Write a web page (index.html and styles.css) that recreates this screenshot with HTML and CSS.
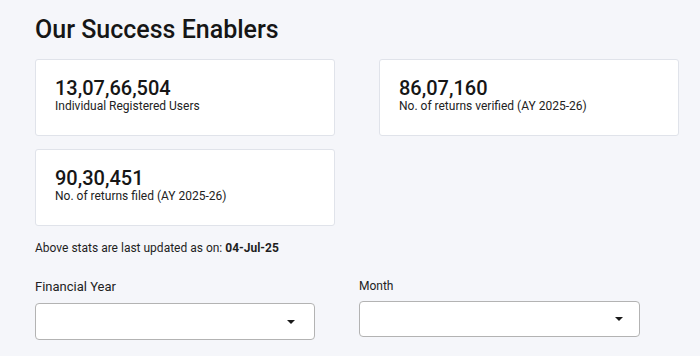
FILE: index.html
```html
<!DOCTYPE html>
<html lang="en">
<head>
<meta charset="utf-8">
<title>Our Success Enablers</title>
<link rel="stylesheet" href="styles.css">
</head>
<body>
<main class="page">
  <h1 class="title">Our Success Enablers</h1>
  <section class="stats">
    <div class="card">
      <div class="num">13,07,66,504</div>
      <div class="label">Individual Registered Users</div>
    </div>
    <div class="card">
      <div class="num">86,07,160</div>
      <div class="label">No. of returns verified (AY 2025-26)</div>
    </div>
    <div class="card">
      <div class="num">90,30,451</div>
      <div class="label">No. of returns filed (AY 2025-26)</div>
    </div>
  </section>
  <p class="updated">Above stats are last updated as on: <b>04-Jul-25</b></p>
  <section class="filters">
    <div class="field field-fy">
      <label class="flabel">Financial Year</label>
      <div class="select"><span class="caret"></span></div>
    </div>
    <div class="field field-month">
      <label class="flabel small">Month</label>
      <div class="select"><span class="caret"></span></div>
    </div>
  </section>
</main>
</body>
</html>
```

FILE: styles.css
```css
html, body {
  margin: 0;
  padding: 0;
  background: #f5f6fa;
}
body {
  font-family: Roboto, "Liberation Sans", sans-serif;
  color: #1b1b1b;
}
.page {
  padding: 16px 0 0 35px;
  width: 644px;
}
.title {
  margin: 0 0 15px 0;
  font-size: 25px;
  line-height: 28px;
  font-weight: 500;
  color: #161616;
}
.stats {
  display: grid;
  grid-template-columns: 300px 300px;
  column-gap: 44px;
  row-gap: 13px;
}
.card {
  box-sizing: border-box;
  height: 77px;
  background: #ffffff;
  border: 1px solid #e0e3ea;
  border-radius: 3px;
  padding: 18px 19px 0 19px;
}
.num {
  font-size: 20px;
  line-height: 21px;
  font-weight: 500;
  color: #161616;
}
.label {
  font-size: 12px;
  line-height: 14px;
  color: #222;
}
.updated {
  margin: 14px 0 0 0;
  font-size: 12px;
  line-height: 16px;
  color: #1e1e1e;
}
.updated b {
  font-weight: 700;
}
.filters {
  display: flex;
  gap: 44px;
  margin-top: 22px;
}
.field {
  width: 280px;
}
.field-month {
  width: 281px;
  margin-top: -1px;
}
.flabel {
  display: block;
  font-size: 13px;
  line-height: 18px;
  color: #222;
  margin-bottom: 7px;
}
.flabel.small {
  font-size: 12px;
  margin-bottom: 6px;
}
.select {
  box-sizing: border-box;
  height: 37px;
  background: #fff;
  border: 1px solid #b3b3b3;
  border-radius: 4px;
  display: flex;
  align-items: center;
  justify-content: flex-end;
  padding-right: 19px;
}
.field-month .select {
  height: 36px;
  padding-right: 16px;
}
.caret {
  width: 0;
  height: 0;
  border-left: 4.5px solid transparent;
  border-right: 4.5px solid transparent;
  border-top: 4.5px solid #1a1a1a;
}
```
